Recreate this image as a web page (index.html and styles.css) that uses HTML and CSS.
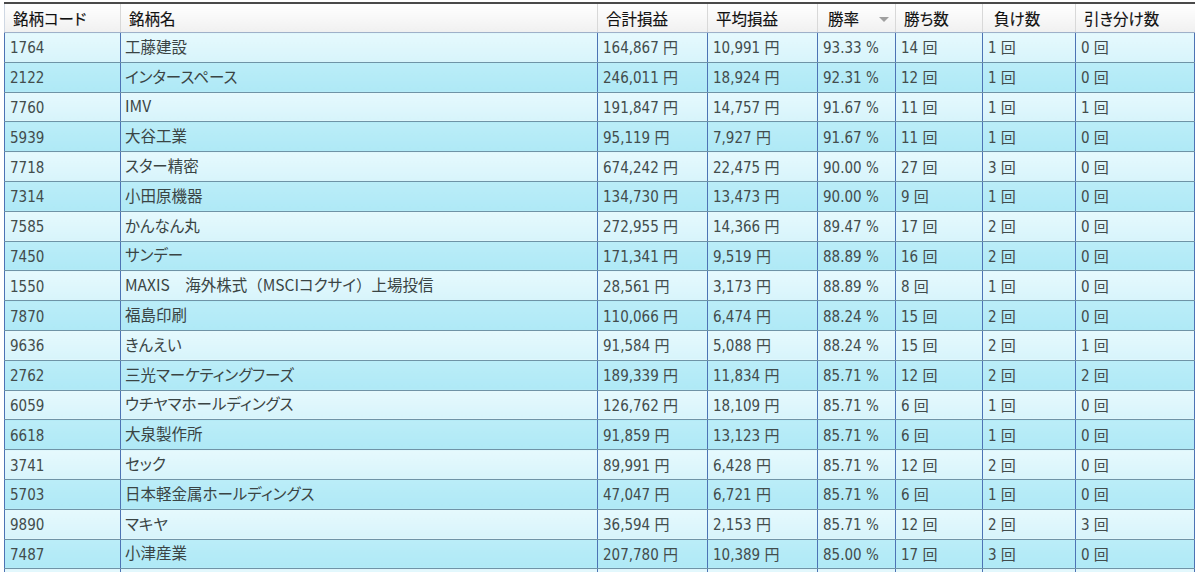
FILE: index.html
```html
<!DOCTYPE html>
<html lang="ja">
<head>
<meta charset="utf-8">
<title>勝率ランキング</title>
<link rel="stylesheet" href="styles.css">
</head>
<body>
<div class="frame">
<table class="grid">
<colgroup>
<col class="c-code"><col class="c-name"><col class="c-total"><col class="c-avg"><col class="c-rate"><col class="c-win"><col class="c-lose"><col class="c-draw">
</colgroup>
<thead>
<tr>
<th>銘柄コード</th><th>銘柄名</th><th>合計損益</th><th>平均損益</th><th class="sorted"><span class="lbl">勝率</span><span class="arrow"></span></th><th>勝ち数</th><th class="wide">負け数</th><th>引き分け数</th>
</tr>
</thead>
<tbody>
<tr><td class="num">1764</td><td class="name">工藤建設</td><td class="num">164,867 円</td><td class="num">10,991 円</td><td class="num">93.33 %</td><td class="num">14 回</td><td class="num">1 回</td><td class="num">0 回</td></tr>
<tr><td class="num">2122</td><td class="name">インタースペース</td><td class="num">246,011 円</td><td class="num">18,924 円</td><td class="num">92.31 %</td><td class="num">12 回</td><td class="num">1 回</td><td class="num">0 回</td></tr>
<tr><td class="num">7760</td><td class="name">IMV</td><td class="num">191,847 円</td><td class="num">14,757 円</td><td class="num">91.67 %</td><td class="num">11 回</td><td class="num">1 回</td><td class="num">1 回</td></tr>
<tr><td class="num">5939</td><td class="name">大谷工業</td><td class="num">95,119 円</td><td class="num">7,927 円</td><td class="num">91.67 %</td><td class="num">11 回</td><td class="num">1 回</td><td class="num">0 回</td></tr>
<tr><td class="num">7718</td><td class="name">スター精密</td><td class="num">674,242 円</td><td class="num">22,475 円</td><td class="num">90.00 %</td><td class="num">27 回</td><td class="num">3 回</td><td class="num">0 回</td></tr>
<tr><td class="num">7314</td><td class="name">小田原機器</td><td class="num">134,730 円</td><td class="num">13,473 円</td><td class="num">90.00 %</td><td class="num">9 回</td><td class="num">1 回</td><td class="num">0 回</td></tr>
<tr><td class="num">7585</td><td class="name">かんなん丸</td><td class="num">272,955 円</td><td class="num">14,366 円</td><td class="num">89.47 %</td><td class="num">17 回</td><td class="num">2 回</td><td class="num">0 回</td></tr>
<tr><td class="num">7450</td><td class="name">サンデー</td><td class="num">171,341 円</td><td class="num">9,519 円</td><td class="num">88.89 %</td><td class="num">16 回</td><td class="num">2 回</td><td class="num">0 回</td></tr>
<tr><td class="num">1550</td><td class="name">MAXIS　海外株式<span class="fw">（</span>MSCIコクサイ<span class="fw">）</span>上場投信</td><td class="num">28,561 円</td><td class="num">3,173 円</td><td class="num">88.89 %</td><td class="num">8 回</td><td class="num">1 回</td><td class="num">0 回</td></tr>
<tr><td class="num">7870</td><td class="name">福島印刷</td><td class="num">110,066 円</td><td class="num">6,474 円</td><td class="num">88.24 %</td><td class="num">15 回</td><td class="num">2 回</td><td class="num">0 回</td></tr>
<tr><td class="num">9636</td><td class="name">きんえい</td><td class="num">91,584 円</td><td class="num">5,088 円</td><td class="num">88.24 %</td><td class="num">15 回</td><td class="num">2 回</td><td class="num">1 回</td></tr>
<tr><td class="num">2762</td><td class="name">三光マーケティングフーズ</td><td class="num">189,339 円</td><td class="num">11,834 円</td><td class="num">85.71 %</td><td class="num">12 回</td><td class="num">2 回</td><td class="num">2 回</td></tr>
<tr><td class="num">6059</td><td class="name">ウチヤマホールディングス</td><td class="num">126,762 円</td><td class="num">18,109 円</td><td class="num">85.71 %</td><td class="num">6 回</td><td class="num">1 回</td><td class="num">0 回</td></tr>
<tr><td class="num">6618</td><td class="name">大泉製作所</td><td class="num">91,859 円</td><td class="num">13,123 円</td><td class="num">85.71 %</td><td class="num">6 回</td><td class="num">1 回</td><td class="num">0 回</td></tr>
<tr><td class="num">3741</td><td class="name">セック</td><td class="num">89,991 円</td><td class="num">6,428 円</td><td class="num">85.71 %</td><td class="num">12 回</td><td class="num">2 回</td><td class="num">0 回</td></tr>
<tr><td class="num">5703</td><td class="name">日本軽金属ホールディングス</td><td class="num">47,047 円</td><td class="num">6,721 円</td><td class="num">85.71 %</td><td class="num">6 回</td><td class="num">1 回</td><td class="num">0 回</td></tr>
<tr><td class="num">9890</td><td class="name">マキヤ</td><td class="num">36,594 円</td><td class="num">2,153 円</td><td class="num">85.71 %</td><td class="num">12 回</td><td class="num">2 回</td><td class="num">3 回</td></tr>
<tr><td class="num">7487</td><td class="name">小津産業</td><td class="num">207,780 円</td><td class="num">10,389 円</td><td class="num">85.00 %</td><td class="num">17 回</td><td class="num">3 回</td><td class="num">0 回</td></tr>
<tr class="partial"><td></td><td></td><td></td><td></td><td></td><td></td><td></td><td></td></tr>
</tbody>
</table>
</div>
</body>
</html>
```

FILE: styles.css
```css
html, body {
  margin: 0;
  padding: 0;
  background: #ffffff;
  overflow: hidden;
}

.frame {
  width: 1200px;
  height: 572px;
  padding-top: 2px;
  padding-left: 4px;
  box-sizing: border-box;
  overflow: hidden;
  background: #ffffff;
}

.grid {
  border-collapse: collapse;
  table-layout: fixed;
  width: 1190px;
  font-family: "Noto Sans CJK JP", "Liberation Sans", sans-serif;
  font-feature-settings: "palt";
}

.c-code { width: 116px; }
.c-name { width: 477px; }
.c-total { width: 110px; }
.c-avg { width: 110px; }
.c-rate { width: 78px; }
.c-win { width: 87px; }
.c-lose { width: 93px; }
.c-draw { width: 119px; }

thead th {
  height: 28px;
  padding: 0 0 0 8px;
  text-align: left;
  font-weight: normal;
  font-size: 15.5px;
  line-height: 18px;
  color: #111111;
  background: linear-gradient(#ffffff, #f0f0f0);
  border-top: 2px solid #4a4a4a;
  border-left: 1px solid #d8d8d8;
  border-bottom: 1px solid #9fb0c8;
  white-space: nowrap;
  overflow: hidden;
  -webkit-text-stroke: 0.15px #111111;
}

thead th:first-child {
  border-left: 1px solid #cfd8e4;
}

thead th.wide {
  padding-left: 11px;
}

thead th.sorted {
  padding-left: 10px;
  position: relative;
}

.arrow {
  position: absolute;
  right: 6px;
  top: 13px;
  width: 0;
  height: 0;
  border-left: 5px solid transparent;
  border-right: 5px solid transparent;
  border-top: 5px solid #a0a0a0;
}

tbody td {
  height: 29.8px;
  box-sizing: border-box;
  padding: 0 0 0 5px;
  font-size: 15.5px;
  line-height: 18px;
  vertical-align: middle;
  color: #3a4444;
  border-left: 1.5px solid #4d73b4;
  border-bottom: 1px solid #6f93a6;
  white-space: nowrap;
  overflow: hidden;
}

tbody td.name {
  padding-left: 4px;
  padding-bottom: 3px;
}

.fw {
  font-feature-settings: normal;
}

tbody td:last-child {
  border-right: 1.5px solid #4d73b4;
}

tbody td.num {
  font-family: "DejaVu Sans Condensed", "Noto Sans CJK JP", sans-serif;
  font-size: 15px;
  padding-top: 2px;
  color: #424c4c;
}

tbody tr:nth-child(odd) td {
  background: linear-gradient(#e6f9fd, #d7f4fb);
}

tbody tr:nth-child(even) td {
  background: linear-gradient(#bbedf8, #afe9f6);
}

tbody tr.partial td {
  height: 8px;
  border-bottom: 0;
}
```
